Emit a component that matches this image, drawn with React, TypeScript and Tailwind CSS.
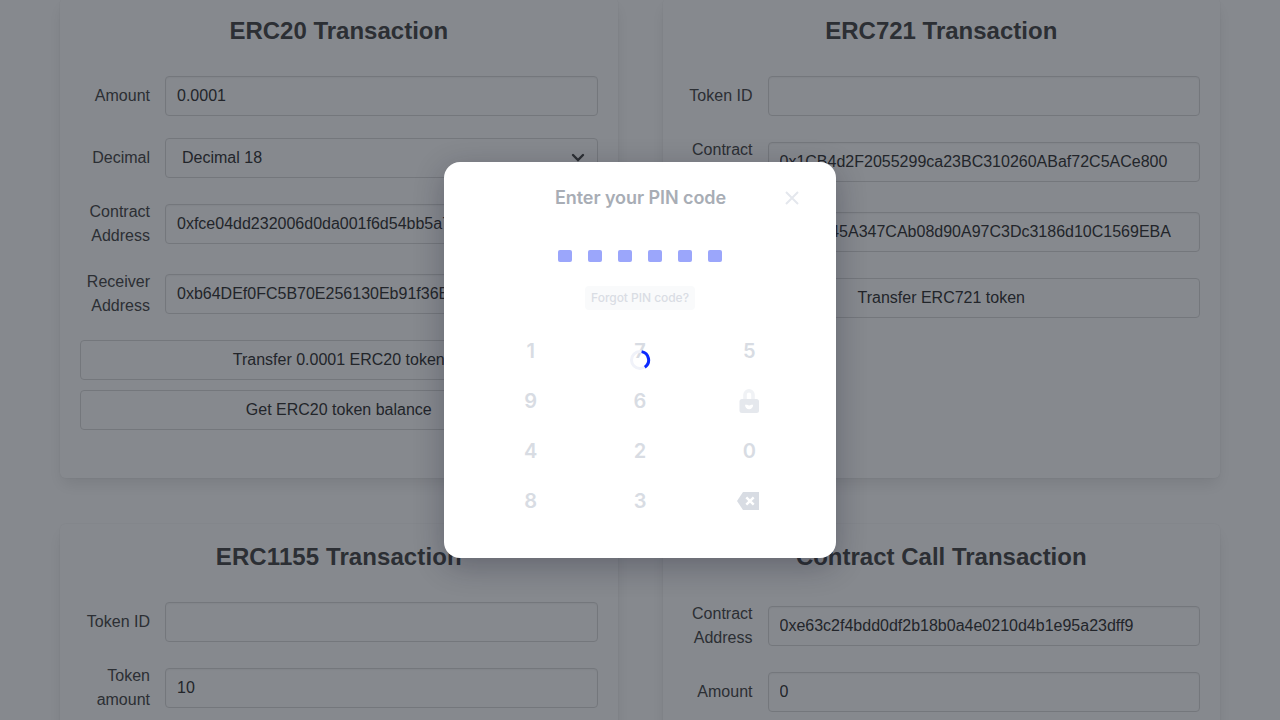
import type { ReactNode } from "react";

function Card({ title, wide = false, children }: { title: string; wide?: boolean; children: ReactNode }) {
  return (
    <section className="rounded-md bg-white px-5 pb-12 shadow-[0_8px_16px_-2px_rgba(10,10,10,0.1),0_0_0_1px_rgba(10,10,10,0.02)]">
      <h2
        className={`pt-[15px] text-center text-2xl leading-9 font-bold text-[#4a4a4a] ${wide ? "tracking-[0.09px]" : "tracking-normal"}`}
      >
        {title}
      </h2>
      <div className="mt-[27px] flex flex-col gap-[22px]">{children}</div>
    </section>
  );
}

function Row({ label, children }: { label: string; children: ReactNode }) {
  return (
    <div className="flex items-center">
      <span className="mr-[15px] w-[70px] shrink-0 text-right leading-6 text-[#4a4a4a]">{label}</span>
      {children}
    </div>
  );
}

function TextField({ label, value = "" }: { label: string; value?: string }) {
  return (
    <Row label={label}>
      <input
        readOnly
        value={value}
        className="h-10 min-w-0 flex-1 rounded border border-[#dbdbdb] bg-white px-[11px] text-[#363636] shadow-[inset_0_1px_2px_rgba(10,10,10,0.05)] outline-none"
      />
    </Row>
  );
}

function SelectField({ label, value }: { label: string; value: string }) {
  return (
    <Row label={label}>
      <div className="flex h-10 flex-1 items-center justify-between rounded border border-[#dbdbdb] bg-white pr-3 pl-4 text-[#363636]">
        <span>{value}</span>
        <svg width="14" height="10" viewBox="0 0 14 10" fill="none" stroke="#4a4a4a" strokeWidth="2.4" strokeLinecap="round">
          <path d="M2 2 7 7 12 2" />
        </svg>
      </div>
    </Row>
  );
}

function Button({ children }: { children: ReactNode }) {
  return (
    <button className="h-10 w-full rounded border border-[#dbdbdb] bg-white text-center text-[#363636]">{children}</button>
  );
}

function LockIcon() {
  return (
    <svg width="24" height="26" viewBox="0 0 24 26" fill="none">
      <path d="M8 12V6.8a4 4 0 0 1 8 0V12" stroke="#f0f2f5" strokeWidth="3.6" />
      <rect x="2.5" y="11" width="19.5" height="14" rx="2.5" fill="#e5e8ed" />
      <path d="M8 16.8H10.2Q12.2 18.4 14.2 16.8H16.2A4.1 4.4 0 0 1 8 16.8Z" fill="#fff" />
    </svg>
  );
}

function BackspaceIcon() {
  return (
    <svg width="22" height="18" viewBox="0 0 22 18" fill="none">
      <path d="M6 0H22V18H6L0 9Z" fill="#d8dce3" />
      <path d="M9.3 5.3 16.7 12.7M16.7 5.3 9.3 12.7" stroke="#fff" strokeWidth="2.4" />
    </svg>
  );
}

const keys: ReactNode[] = [
  "1", "7", "5",
  "9", "6", <LockIcon />,
  "4", "2", "0",
  "8", "3", <span className="mr-[3px]"><BackspaceIcon /></span>,
];

function PinDialog() {
  return (
    <div
      role="dialog"
      className="relative h-[396px] w-[392px] rounded-2xl bg-white font-['Inter',sans-serif] shadow-[0_8px_30px_rgba(20,20,40,0.3)]"
    >
      <header className="grid grid-cols-[1fr_auto_1fr] items-center pt-[22px]">
        <h1 className="col-start-2 pl-px text-lg leading-7 font-semibold tracking-[-0.07px] text-[#a8adb5]">
          Enter your PIN code
        </h1>
        <button aria-label="Close" className="mr-[37px] justify-self-end">
          <svg width="14" height="14" viewBox="0 0 14 14" stroke="#e4e7ed" strokeWidth="2" fill="none">
            <path d="M1 1 13 13M13 1 1 13" />
          </svg>
        </button>
      </header>
      <div className="mt-[38px] flex justify-center gap-4">
        {[0, 1, 2, 3, 4, 5].map((i) => (
          <span key={i} className="h-3 w-3.5 rounded-[2px] bg-[#9ba6fb]" />
        ))}
      </div>
      <div className="mt-6 flex justify-center">
        <button className="h-6 w-[110px] rounded bg-[#f9fafb] text-xs font-medium tracking-[-0.04px] text-[#d9dde4]">
          Forgot PIN code?
        </button>
      </div>
      <div className="mx-auto mt-4 grid w-[328px] grid-cols-3">
        {keys.map((key, i) => (
          <button key={i} className="flex h-[50px] items-center justify-center text-xl font-semibold text-[#d8dce3]">
            {key}
          </button>
        ))}
      </div>
      <div className="absolute inset-0 flex items-center justify-center">
        <svg width="22" height="22" viewBox="-1 -1 22 22" fill="none" strokeWidth="3">
          <circle cx="10" cy="10" r="8.5" stroke="#f0f2f9" />
          <path d="M11.6 1.6A8.6 8.6 0 0 1 14.8 17.2" stroke="#0a29ff" />
        </svg>
      </div>
    </div>
  );
}

export default function App() {
  return (
    <div className="relative h-[720px] overflow-hidden bg-white font-['Liberation_Sans',sans-serif] text-base">
      <main className="-mt-[2px] grid grid-cols-2 gap-x-[45px] gap-y-[46px] px-[60px]">
        <Card title="ERC20 Transaction">
          <TextField label="Amount" value="0.0001" />
          <SelectField label="Decimal" value="Decimal 18" />
          <TextField label="Contract Address" value="0xfce04dd232006d0da001f6d54bb5a7fc969dbc08" />
          <TextField label="Receiver Address" value="0xb64DEf0FC5B70E256130Eb91f36E628132b0Ab2f" />
          <div className="flex flex-col gap-2.5">
            <Button>Transfer 0.0001 ERC20 token</Button>
            <Button>Get ERC20 token balance</Button>
          </div>
        </Card>
        <Card title="ERC721 Transaction">
          <TextField label="Token ID" />
          <TextField label="Contract Address" value="0x1CB4d2F2055299ca23BC310260ABaf72C5ACe800" />
          <TextField label="Receiver Address" value="0xb3cc45A347CAb08d90A97C3Dc3186d10C1569EBA" />
          <Button>Transfer ERC721 token</Button>
        </Card>
        <Card title="ERC1155 Transaction" wide>
          <TextField label="Token ID" />
          <TextField label="Token amount" value="10" />
        </Card>
        <Card title="Contract Call Transaction">
          <TextField label="Contract Address" value="0xe63c2f4bdd0df2b18b0a4e0210d4b1e95a23dff9" />
          <TextField label="Amount" value="0" />
        </Card>
      </main>
      <div className="absolute inset-0 flex items-center justify-center bg-[rgba(14,20,30,0.5)]">
        <PinDialog />
      </div>
    </div>
  );
}
